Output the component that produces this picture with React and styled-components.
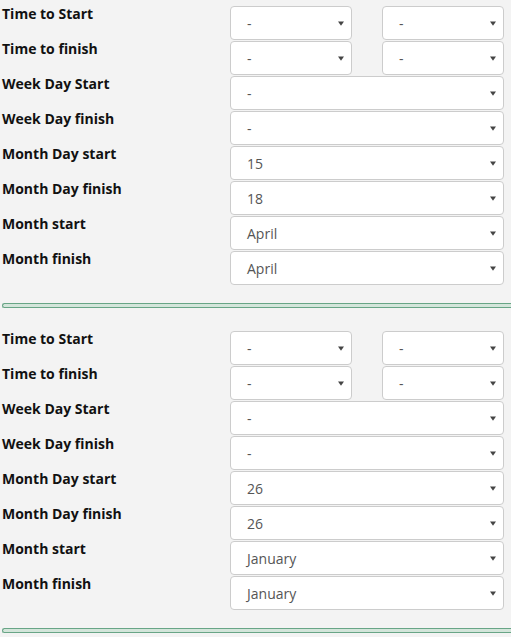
import React from "react";
import styled, { createGlobalStyle } from "styled-components";

const Global = createGlobalStyle`
  html, body { margin: 0; padding: 0; background: #f3f3f3; overflow-x: hidden; }
  body { font-family: "Open Sans", "Liberation Sans", sans-serif; }
`;

const Page = styled.div`
  padding: 6px 0 0 2px;
`;

const Section = styled.div`
  display: flex;
  flex-direction: column;
  gap: 1px;
`;

const Row = styled.div`
  display: grid;
  grid-template-columns: 228px 274px;
  align-items: start;
`;

const Label = styled.div`
  margin-top: -2px;
  font-size: 14px;
  line-height: 20px;
  font-weight: 700;
  color: #111;
`;

const Pair = styled.div`
  display: grid;
  grid-template-columns: 122px 122px;
  column-gap: 30px;
`;

const SelectBox = styled.div`
  box-sizing: border-box;
  height: 34px;
  display: flex;
  align-items: center;
  justify-content: space-between;
  padding: 0 7px 0 16px;
  background: #fff;
  border: 1px solid #ccc;
  border-radius: 4px;
  font-size: 14px;
  color: #555;
`;

const Value = styled.span`
  line-height: 20px;
  padding-top: 2px;
`;

const Divider = styled.div`
  box-sizing: border-box;
  height: 5px;
  margin: 18px 0 23px 0;
  background: #d3e5da;
  border: 1px solid #68a586;
  border-right: none;
  border-radius: 3px 0 0 3px;
`;

const Arrow = () => (
  <svg width="6" height="5" viewBox="0 0 6 5" aria-hidden="true">
    <path d="M0 0.5 H6 L3 4.8 Z" fill="#444" />
  </svg>
);

const Select = ({ value }) => (
  <SelectBox>
    <Value>{value}</Value>
    <Arrow />
  </SelectBox>
);

const Block = ({ d }) => (
  <>
    <Section>
      <Row>
        <Label>Time to Start</Label>
        <Pair>
          <Select value="-" />
          <Select value="-" />
        </Pair>
      </Row>
      <Row>
        <Label>Time to finish</Label>
        <Pair>
          <Select value="-" />
          <Select value="-" />
        </Pair>
      </Row>
      <Row>
        <Label>Week Day Start</Label>
        <Select value="-" />
      </Row>
      <Row>
        <Label>Week Day finish</Label>
        <Select value="-" />
      </Row>
      <Row>
        <Label>Month Day start</Label>
        <Select value={d.dayStart} />
      </Row>
      <Row>
        <Label>Month Day finish</Label>
        <Select value={d.dayFinish} />
      </Row>
      <Row>
        <Label>Month start</Label>
        <Select value={d.monthStart} />
      </Row>
      <Row>
        <Label>Month finish</Label>
        <Select value={d.monthFinish} />
      </Row>
    </Section>
    <Divider />
  </>
);

const data = [
  { dayStart: "15", dayFinish: "18", monthStart: "April", monthFinish: "April" },
  { dayStart: "26", dayFinish: "26", monthStart: "January", monthFinish: "January" },
];

export default function App() {
  return (
    <>
      <Global />
      <Page>
        {data.map((d, i) => (
          <Block key={i} d={d} />
        ))}
      </Page>
    </>
  );
}
